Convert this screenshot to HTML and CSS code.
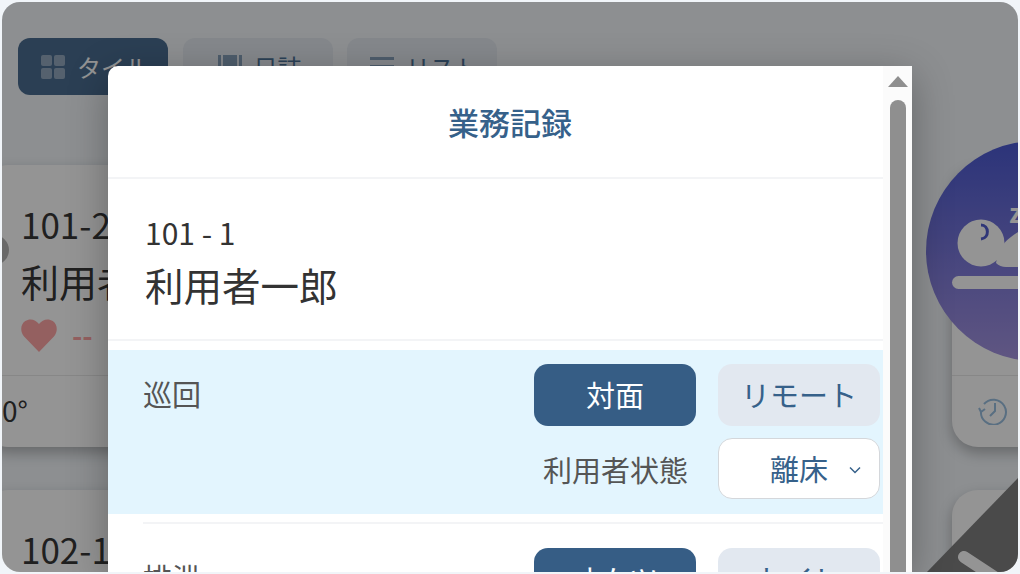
FILE: index.html
```html
<!DOCTYPE html>
<html lang="ja">
    <head>
        <meta charset="UTF-8" />
        <meta name="viewport" content="width=device-width, initial-scale=1.0" />
        <title>業務記録</title>
        <link rel="stylesheet" href="styles.css">
    </head>
    <body>
        <div class="screen">
            <main class="page">
                <nav class="tabs">
                    <a class="tab active" href="#tile">
                        <svg class="tab-icon" viewBox="0 0 24 24"><rect x="0" y="0" width="11" height="11" rx="2"/><rect x="13" y="0" width="11" height="11" rx="2"/><rect x="0" y="13" width="11" height="11" rx="2"/><rect x="13" y="13" width="11" height="11" rx="2"/></svg>
                        <span>タイル</span>
                    </a>
                    <a class="tab" href="#log">
                        <svg class="tab-icon" viewBox="0 0 24 24"><rect x="0" y="0" width="3" height="24"/><rect x="5" y="0" width="14" height="24"/><rect x="21" y="0" width="3" height="24"/></svg>
                        <span>日誌</span>
                    </a>
                    <a class="tab" href="#list">
                        <svg class="tab-icon" viewBox="0 0 24 24"><rect x="0" y="2" width="24" height="3"/><rect x="0" y="10" width="24" height="3"/><rect x="0" y="18" width="24" height="3"/></svg>
                        <span>リスト</span>
                    </a>
                </nav>
                <section class="tile-row first">
                    <article class="tile">
                        <div class="tile-top">
                            <span class="status-dot"></span>
                            <div class="tile-room">101-2</div>
                            <div class="tile-name">利用者二郎</div>
                            <div class="tile-heart">
                                <svg viewBox="0 0 24 22"><path d="M12 22 L2.2 11.8 C-0.8 8.6 -0.4 3.6 2.8 1.4 C5.8 -0.6 9.8 0.2 12 3.4 C14.2 0.2 18.2 -0.6 21.2 1.4 C24.4 3.6 24.8 8.6 21.8 11.8 Z"/></svg>
                                <span>--</span>
                            </div>
                        </div>
                        <div class="tile-foot">0°</div>
                    </article>
                    <article class="tile">
                        <div class="sleep-badge">
                            <svg viewBox="0 0 220 220">
                                <circle cx="55" cy="102" r="23.5"/>
                                <path d="M70 122 C73 106 78 100 92 91 H130 V126 H80 Q74 126 70 122 Z"/>
                                <text x="83" y="82">z</text>
                                <rect x="26" y="135" width="190" height="13" rx="6.5"/>
                                <path class="eye" d="M55 84 C63 84 64 97 55 98"/>
                            </svg>
                        </div>
                        <div class="tile-top"></div>
                        <div class="tile-foot">
                            <svg class="history-icon" viewBox="0 0 30 30"><path d="M6 9 A12.5 12.5 0 1 1 3 16"/><path d="M1 13 L3 17 L7 14"/><path d="M17 8 V16 L12 21"/></svg>
                        </div>
                    </article>
                </section>
                <section class="tile-row">
                    <article class="tile">
                        <div class="tile-top">
                            <div class="tile-room">102-1</div>
                        </div>
                    </article>
                    <article class="tile"></article>
                </section>
            </main>
            <svg class="band" viewBox="0 0 120 120"><path d="M120 26 V120 H29 Z"/><path class="band-line" d="M66 105 L104 130"/></svg>
            <div class="overlay"></div>
            <section class="modal">
                <div class="modal-main">
                    <header class="modal-header">
                        <h2>業務記録</h2>
                    </header>
                    <div class="resident">
                        <div class="resident-room">101 - 1</div>
                        <div class="resident-name">利用者一郎</div>
                    </div>
                    <div class="record-row highlight">
                        <div class="record-label">巡回</div>
                        <div class="record-fields">
                            <div class="button-line">
                                <button class="choice selected">対面</button>
                                <button class="choice">リモート</button>
                            </div>
                            <div class="button-line">
                                <span class="field-label">利用者状態</span>
                                <div class="select-box">
                                    <span>離床</span>
                                    <svg viewBox="0 0 12 8"><path d="M1 1.5 L6 6.5 L11 1.5"/></svg>
                                </div>
                            </div>
                        </div>
                    </div>
                    <div class="row-divider"></div>
                    <div class="record-row">
                        <div class="record-label">排泄</div>
                        <div class="record-fields">
                            <div class="button-line">
                                <button class="choice selected">オムツ</button>
                                <button class="choice">トイレ</button>
                            </div>
                        </div>
                    </div>
                </div>
                <div class="scroll-track">
                    <div class="scroll-up"></div>
                    <div class="scroll-thumb"></div>
                </div>
            </section>
        </div>
    </body>
</html>
```

FILE: styles.css
```css
* {
    box-sizing: border-box;
}

body {
    margin: 0;
    height: 574px;
    padding: 2px;
    background-color: #f1f5f9;
    font-family: "Noto Sans CJK JP", "Noto Sans", sans-serif;
    overflow: hidden;
}

.screen {
    position: relative;
    height: 570px;
    border-radius: 18px;
    overflow: hidden;
    background-color: #f1f5f9;
}

.page {
    position: relative;
    z-index: 0;
    padding: 36px 0 0 16px;
}

.tabs {
    display: flex;
    gap: 14.5px;
    margin-bottom: 70px;
}

.tab {
    display: flex;
    align-items: center;
    justify-content: center;
    gap: 12px;
    width: 150px;
    height: 57px;
    padding-left: 4px;
    border-radius: 12px;
    background-color: #e2e8f0;
    color: #36618a;
    font-size: 24px;
    text-decoration: none;
}

.tab.active {
    background-color: #365d85;
    color: #ffffff;
}

.tab-icon {
    width: 24px;
    height: 24px;
    fill: #36618a;
    opacity: 0.6;
}

.tab.active .tab-icon {
    fill: #ffffff;
    opacity: 0.4;
}

.tile-row {
    display: flex;
    justify-content: space-between;
    height: 282px;
    margin: 0 -200px 43px -36px;
}

.tile {
    position: relative;
    display: flex;
    flex-direction: column;
    width: 266px;
    border-radius: 26px;
    background-color: #ffffff;
    color: #222222;
    box-shadow: 0 6px 14px rgba(0, 0, 0, 0.3);
}

.tile-top {
    position: relative;
    height: 211px;
    padding: 34px 0 0 39px;
    border-bottom: 1px solid #e6e6e6;
}

.status-dot {
    position: absolute;
    top: 70px;
    left: -3px;
    width: 30px;
    height: 30px;
    border-radius: 50%;
    background-color: #acacac;
}

.tile-room {
    font-size: 35px;
    line-height: 50px;
}

.tile-name {
    font-size: 38px;
    line-height: 64px;
    white-space: nowrap;
}

.tile-heart {
    display: flex;
    align-items: center;
    gap: 15px;
    margin-top: 4px;
    color: #ff9c9c;
    font-size: 28px;
    font-weight: 700;
    line-height: 36px;
}

.tile-heart svg {
    width: 36px;
    height: 33px;
    fill: #ff9c9c;
}

.tile-foot {
    display: flex;
    align-items: center;
    flex: 1;
    padding: 0 0 4px 20px;
    font-size: 28px;
}

.tile-foot .history-icon {
    margin-left: 6px;
}

.sleep-badge {
    position: absolute;
    top: -24px;
    left: -26px;
    width: 220px;
    height: 220px;
    border-radius: 50%;
    background: linear-gradient(#3747cd, #9b88dc);
    z-index: 1;
}

.sleep-badge svg {
    display: block;
    fill: #ffffff;
}

.sleep-badge text {
    font-size: 26px;
    font-weight: 700;
}

.sleep-badge .eye {
    fill: none;
    stroke: #3f4cc9;
    stroke-width: 3;
}

.history-icon {
    width: 30px;
    height: 30px;
    fill: none;
    stroke: #8fb8dc;
    stroke-width: 2;
}

.band {
    position: absolute;
    right: 0;
    bottom: 0;
    width: 120px;
    height: 120px;
    fill: #717171;
}

.band-line {
    fill: none;
    stroke: #ffffff;
    stroke-width: 12;
    stroke-linecap: round;
}

.overlay {
    position: absolute;
    top: 0;
    right: 0;
    bottom: 0;
    left: 0;
    background-color: rgba(31, 31, 31, 0.48);
}

.modal {
    position: absolute;
    top: 64px;
    left: 106px;
    display: flex;
    width: 804px;
    height: 506px;
    border-radius: 10px 0 0 0;
    background-color: #ffffff;
    box-shadow: 0 10px 40px rgba(0, 0, 0, 0.3);
    overflow: hidden;
}

.modal-main {
    flex: 1;
    min-width: 0;
    overflow: hidden;
}

.modal-header {
    height: 113px;
    padding-left: 29px;
    border-bottom: 2px solid #f3f4f6;
    text-align: center;
}

.modal-header h2 {
    margin: 0;
    color: #36618a;
    font-size: 31px;
    font-weight: 500;
    line-height: 112px;
}

.resident {
    height: 162px;
    margin-bottom: 9px;
    padding: 31px 0 0 37px;
    border-bottom: 2px solid #f3f4f6;
    color: #333333;
}

.resident-room {
    font-size: 30px;
    line-height: 44px;
}

.resident-name {
    font-size: 38.5px;
    line-height: 60px;
}

.record-row {
    display: flex;
    justify-content: space-between;
    padding: 14px 3px 15px 35px;
}

.record-row.highlight {
    background-color: #e3f5fe;
}

.row-divider {
    height: 2px;
    margin: 8px 0 0 35px;
    background-color: #f3f4f6;
}

.row-divider + .record-row {
    padding-top: 24px;
}

.record-label {
    padding-top: 6px;
    color: #555555;
    font-size: 29px;
    line-height: 46px;
}

.record-fields {
    display: flex;
    flex-direction: column;
    gap: 12px;
}

.button-line {
    display: flex;
    align-items: center;
    justify-content: flex-end;
    gap: 30px;
}

.button-line .choice + .choice {
    margin-left: -8px;
}

.choice {
    width: 162px;
    height: 62px;
    padding: 0 0 2px;
    border: 0;
    border-radius: 14px;
    background-color: #e2e8f0;
    color: #36618a;
    font-family: inherit;
    font-size: 29px;
}

.choice.selected {
    background-color: #365d85;
    color: #ffffff;
}

.field-label {
    color: #555555;
    font-size: 29px;
}

.select-box {
    position: relative;
    width: 162px;
    height: 61px;
    padding-left: 51px;
    border: 1px solid #d4d7db;
    border-radius: 14px;
    background-color: #ffffff;
    color: #36618a;
    font-size: 29px;
    line-height: 59px;
}

.select-box svg {
    position: absolute;
    top: 27px;
    right: 18px;
    width: 12px;
    height: 8px;
    fill: none;
    stroke: #36618a;
    stroke-width: 1.5;
}

.scroll-track {
    display: flex;
    flex: none;
    flex-direction: column;
    align-items: center;
    width: 29px;
    padding-top: 10px;
    background-color: #fbfbfb;
}

.scroll-up {
    width: 0;
    height: 0;
    border-left: 10px solid transparent;
    border-right: 10px solid transparent;
    border-bottom: 11px solid #8f8f8f;
}

.scroll-thumb {
    flex: 1;
    width: 16px;
    margin-top: 13px;
    border-radius: 8px 8px 0 0;
    background-color: #8f8f8f;
}
```
